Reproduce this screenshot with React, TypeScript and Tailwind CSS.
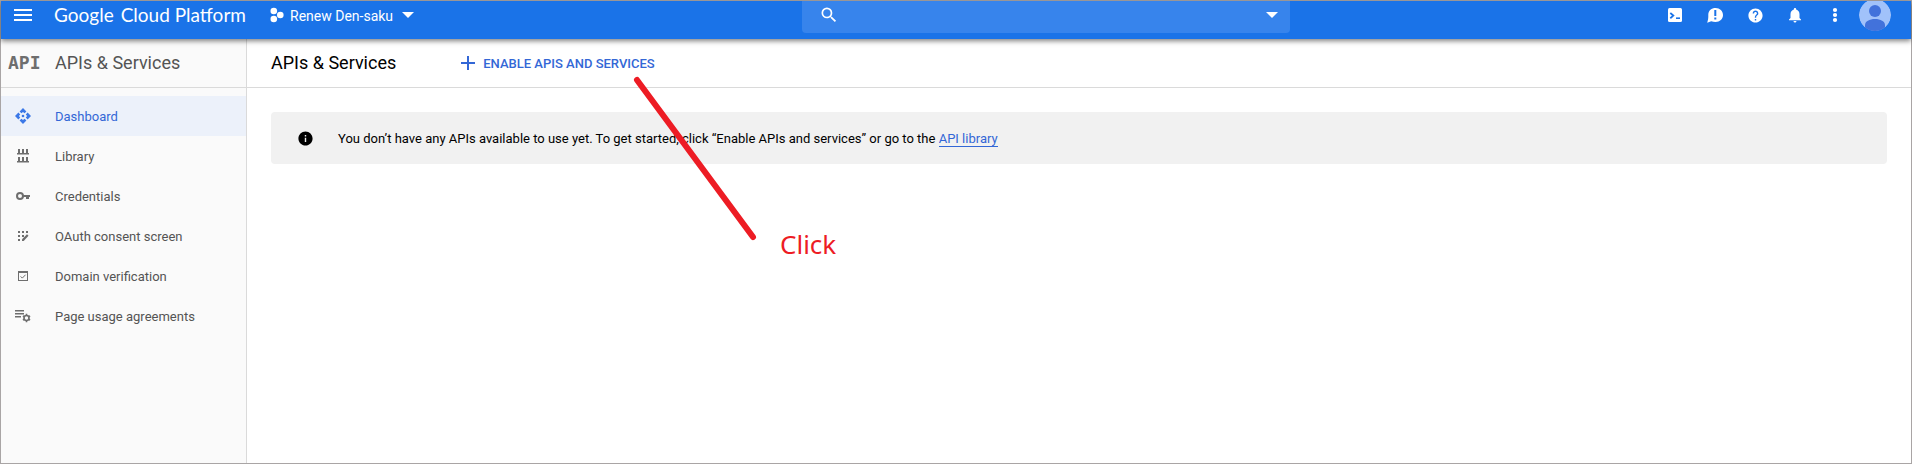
import type { ReactNode } from "react";
import { MdAdd, MdHelp, MdInfo, MdMenu, MdNotifications, MdSearch } from "react-icons/md";

function CaretDown() {
  return (
    <svg width="12" height="6" viewBox="0 0 12 6" fill="currentColor" aria-hidden="true">
      <path d="M0 0h12L6 6z" />
    </svg>
  );
}

function ProjectIcon() {
  return (
    <svg width="14" height="16" viewBox="0 0 14 16" fill="currentColor" aria-hidden="true">
      <circle cx="3.8" cy="4" r="3.3" />
      <circle cx="3.8" cy="12" r="3.3" />
      <circle cx="10.3" cy="8" r="3.3" />
    </svg>
  );
}

function ShellIcon() {
  return (
    <svg width="14" height="14" viewBox="0 0 14 14" aria-hidden="true">
      <rect width="14" height="14" rx="1.5" fill="currentColor" />
      <path d="M2.3 5l3 2.6-3 2.6" fill="none" stroke="#1a73e8" strokeWidth="1.8" />
      <path d="M8 10.2h4" stroke="#1a73e8" strokeWidth="1.6" />
    </svg>
  );
}

function FeedbackIcon() {
  return (
    <svg width="16" height="16" viewBox="0 0 16 16" aria-hidden="true">
      <path
        d="M8.6 1C4.500 1 1.300 3.600 1.300 7.600c0 1.700.1 2.700-.2 4.700L.2 15.700l4-1.500c1.300.5 2.800.8 4.400.8C12.800 15 16 12 16 8s-3.200-7-7.400-7z"
        fill="currentColor"
      />
      <path d="M8.300 3v6M8.300 10.600v2" stroke="#1a73e8" strokeWidth="2" />
    </svg>
  );
}

function MoreIcon() {
  return (
    <svg width="6" height="16" viewBox="0 0 6 16" fill="currentColor" aria-hidden="true">
      <circle cx="3" cy="3" r="2.1" />
      <circle cx="3" cy="8" r="2.1" />
      <circle cx="3" cy="13" r="2.1" />
    </svg>
  );
}

function Avatar() {
  return (
    <svg width="32" height="32" viewBox="0 0 32 32" className="rounded-full" aria-hidden="true">
      <circle cx="16" cy="16" r="16" fill="#a1c2fa" />
      <circle cx="16" cy="12" r="6" fill="#4272db" />
      <path d="M6 32v-6c0-3.500 4.500-6 10-6s10 2.500 10 6v6z" fill="#4272db" />
    </svg>
  );
}

function DashboardIcon() {
  return (
    <svg width="16" height="16" viewBox="0 0 16 16" fill="currentColor" aria-hidden="true">
      <path d="M8 0l3.400 3.400L9.600 5.200 8 3.900 6.400 5.200 4.600 3.400z" />
      <path d="M8 16l3.400-3.400-1.800-1.800L8 12.100l-1.600-1.300-1.800 1.800z" />
      <path d="M0 8l3.400-3.400 1.800 1.800L3.900 8l1.300 1.600-1.800 1.800z" />
      <path d="M16 8l-3.400-3.400-1.800 1.800L12.100 8l-1.300 1.600 1.800 1.800z" />
      <circle cx="8" cy="8" r="1.300" />
    </svg>
  );
}

function LibraryIcon() {
  return (
    <svg width="16" height="16" viewBox="0 0 16 16" fill="currentColor" aria-hidden="true">
      <path d="M3 1h2v4H3zM7 1h2v4H7zM11 1h2v4h-2zM2 5h12v1.500H2zM3 9h2v4H3zM7 9h2v4H7zM11 9h2v4h-2zM2 13h12v1.500H2z" />
    </svg>
  );
}

function KeyIcon() {
  return (
    <svg width="16" height="16" viewBox="0 0 16 16" aria-hidden="true">
      <circle cx="5" cy="8" r="3" fill="none" stroke="currentColor" strokeWidth="2" />
      <path d="M8 7h7v2h-1v2h-3V9H8z" fill="currentColor" />
    </svg>
  );
}

function ConsentIcon() {
  return (
    <svg width="16" height="16" viewBox="0 0 16 16" fill="currentColor" aria-hidden="true">
      <path d="M3 3h2v2H3zM7 3h2v2H7zM11 3h2v2h-2zM3 7h2v2H3zM7 7h2v2H7zM3 11h2v2H3z" />
      <path d="M7 13v-1.800L12 6.200l1.500 1.500L8.700 13z" />
    </svg>
  );
}

function DomainIcon() {
  return (
    <svg width="16" height="16" viewBox="0 0 16 16" fill="none" stroke="currentColor" aria-hidden="true">
      <rect x="3.500" y="3.500" width="9" height="9" />
      <path d="M3 4h10" strokeWidth="2" />
      <path d="M5.600 8.400l1.700 1.700 3.300-3.400" />
    </svg>
  );
}

function AgreementsIcon() {
  return (
    <svg width="16" height="16" viewBox="0 0 16 16" fill="currentColor" aria-hidden="true">
      <path d="M0 2h9v1.500H0zM0 5h9v1.500H0zM0 8h6v1.500H0z" />
      <circle cx="11.500" cy="10" r="2.500" fill="none" stroke="currentColor" strokeWidth="1.600" />
      <path
        d="M11.500 5.800v1.800M11.500 12.400v1.800M7.900 7.900l1.500.9M13.600 11.200l1.500.9M7.900 12.100l1.500-.9M13.600 8.800l1.500-.9"
        stroke="currentColor"
        strokeWidth="1.600"
      />
    </svg>
  );
}

const navItems: { label: string; icon: ReactNode; active?: boolean }[] = [
  { label: "Dashboard", icon: <DashboardIcon />, active: true },
  { label: "Library", icon: <LibraryIcon /> },
  { label: "Credentials", icon: <KeyIcon /> },
  { label: "OAuth consent screen", icon: <ConsentIcon /> },
  { label: "Domain verification", icon: <DomainIcon /> },
  { label: "Page usage agreements", icon: <AgreementsIcon /> },
];

const actions: { label: string; icon: ReactNode }[] = [
  { label: "Activate Cloud Shell", icon: <ShellIcon /> },
  { label: "Send feedback", icon: <FeedbackIcon /> },
  { label: "Help", icon: <MdHelp size={17} /> },
  { label: "Notifications", icon: <MdNotifications size={18} /> },
  { label: "More options", icon: <MoreIcon /> },
  { label: "Account", icon: <Avatar /> },
];

function TopBar() {
  return (
    <header className="relative z-10 bg-[#1a73e8] text-white shadow-[0_2px_5px_rgba(0,0,0,0.5)]">
      <div className="flex h-[38px] items-end overflow-hidden">
        <div className="grid h-12 grow grid-cols-[801fr_488fr_621fr] items-center">
          <div className="flex items-center whitespace-nowrap">
            <button aria-label="Main menu" className="ml-[10px]">
              <MdMenu size={24} />
            </button>
            <a href="#home" className="ml-[19px] flex w-[216px] gap-[7px] font-['Lato',sans-serif] text-[19px] leading-6">
              <span>Google</span>
              <span>Cloud Platform</span>
            </a>
            <button className="flex items-center text-[14px] leading-5">
              <ProjectIcon />
              <span className="mr-[9px] ml-[6px] pt-0.5">Renew Den-saku</span>
              <CaretDown />
            </button>
          </div>
          <div className="flex h-9 items-center rounded-sm bg-[#3784ec] pr-3 pl-[17px]">
            <MdSearch size={20} className="shrink-0" />
            <input aria-label="Search products and resources" className="min-w-0 grow bg-transparent px-3 text-[14px] outline-none" />
            <button aria-label="Show search options">
              <CaretDown />
            </button>
          </div>
          <div className="flex justify-end pr-4">
            {actions.map((a) => (
              <button key={a.label} aria-label={a.label} className="flex h-8 w-10 items-center justify-center">
                {a.icon}
              </button>
            ))}
          </div>
        </div>
      </div>
    </header>
  );
}

function Sidebar() {
  return (
    <aside className="w-[246px] shrink-0 border-r border-[#dadada] bg-[#fafafa] text-[#545454]">
      <div className="flex h-[49px] items-center border-b border-[#dadada] pl-[7px] text-[18px] leading-6">
        <span aria-hidden="true" className="w-[47px] font-['DejaVu_Sans_Mono',monospace] font-bold text-[#6e6e6e]">
          API
        </span>
        <h2>APIs &amp; Services</h2>
      </div>
      <nav className="pt-2">
        {navItems.map((item) => (
          <a
            key={item.label}
            href={"#" + item.label.toLowerCase().replaceAll(" ", "-")}
            className={
              item.active
                ? "flex h-10 items-center gap-6 bg-[#ecf1fa] pl-[14px] text-[13px] leading-5 text-[#3367d6]"
                : "flex h-10 items-center gap-6 pl-[14px] text-[13px] leading-5"
            }
          >
            <span className={item.active ? "text-[#3b78e7]" : "text-[#6e6e6e]"}>{item.icon}</span>
            <span className="pt-0.5">{item.label}</span>
          </a>
        ))}
      </nav>
    </aside>
  );
}

function Annotation() {
  return (
    <div className="pointer-events-none absolute top-[69px] left-[629px] z-20 text-[#ed1c24]">
      <svg width="130" height="175" viewBox="0 0 130 175" aria-hidden="true">
        <path d="M7 10L123 167" stroke="currentColor" strokeWidth="6" strokeLinecap="round" />
      </svg>
      <span className="absolute top-[156px] left-[150px] font-['Noto_Sans',sans-serif] text-[26px] leading-9">Click</span>
    </div>
  );
}

export default function App() {
  return (
    <div className="relative flex min-h-screen flex-col border border-[#a9a5a5] bg-white font-['Roboto',sans-serif] text-black">
      <TopBar />
      <div className="flex grow">
        <Sidebar />
        <main className="min-w-0 grow">
          <div className="flex h-[49px] items-center border-b border-[#dadada] pl-6">
            <h1 className="text-[18px] leading-6">APIs &amp; Services</h1>
            <button className="ml-[60px] flex items-center gap-[3px] text-[13px] leading-5 font-medium text-[#3367d6]">
              <MdAdd size={24} />
              <span className="pt-0.5">ENABLE APIS AND SERVICES</span>
            </button>
          </div>
          <div className="mx-6 mt-6 flex h-[52px] items-center gap-6 rounded bg-[#f1f1f1] pl-[26px]">
            <MdInfo size={17} className="shrink-0" />
            <p className="pt-0.5 text-[13px] leading-5">
              You don’t have any APIs available to use yet. To get started, click “Enable APIs and services” or go to the{" "}
              <a href="#library" className="border-b border-[#3367d6] text-[#3367d6]">
                API library
              </a>
            </p>
          </div>
        </main>
      </div>
      <Annotation />
    </div>
  );
}
